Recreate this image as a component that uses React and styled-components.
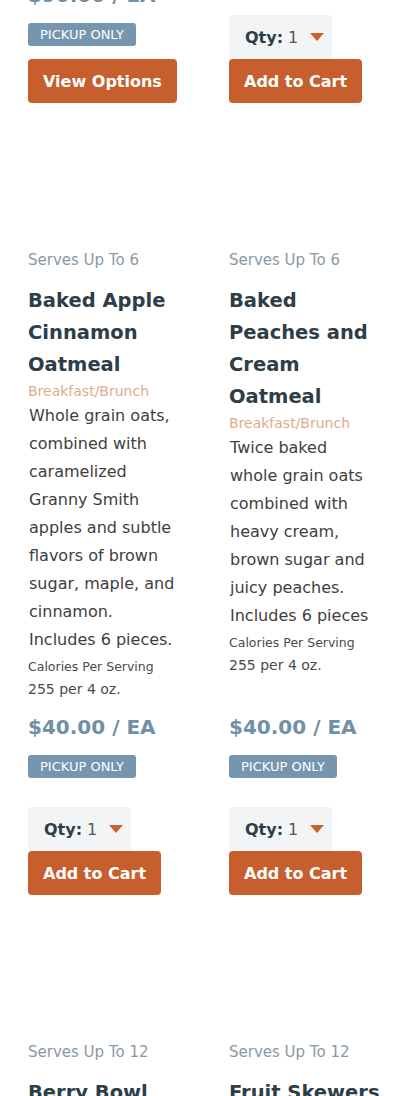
import React from 'react';
import styled, { createGlobalStyle } from 'styled-components';

const GlobalStyle = createGlobalStyle`
  html, body {
    margin: 0;
    padding: 0;
    background: #fff;
    overflow: hidden;
  }
  body {
    font-family: "DejaVu Sans", "Liberation Sans", sans-serif;
  }
`;

const Grid = styled.div`
  display: grid;
  grid-template-columns: 1fr 1fr;
  column-gap: 28px;
  row-gap: 28px;
  padding: 0 8px 0 28px;
  margin-top: -92px;
`;

const Card = styled.div`
  display: flex;
  flex-direction: column;
  padding-right: 14px;
  min-width: 0;
`;

const Photo = styled.div`
  height: 120px;
  flex-shrink: 0;
`;

const Serves = styled.div`
  font-size: 15px;
  line-height: 18px;
  color: #8a99a4;
  margin-bottom: 16px;
`;

const Title = styled.h3`
  margin: 0;
  font-size: 19.5px;
  line-height: 32px;
  font-weight: 700;
  color: #2e3e49;
`;

const Category = styled.div`
  font-size: 14px;
  line-height: 20px;
  color: #e0ab8d;
  margin-bottom: 1px;
`;

const Desc = styled.p`
  margin: 0;
  padding: 0 11px 0 1px;
  font-size: 16px;
  line-height: 28px;
  color: #404040;
`;

const CalLabel = styled.div`
  margin-top: 2px;
  font-size: 12.5px;
  line-height: 22px;
  color: #4a4a4a;
`;

const CalValue = styled.div`
  font-size: 14px;
  line-height: 22px;
  color: #4a4a4a;
`;

const Purchase = styled.div`
  margin-top: auto;
  padding-top: 13px;
  display: flex;
  flex-direction: column;
  align-items: flex-start;
`;

const Price = styled.div`
  font-size: 20px;
  line-height: 28px;
  font-weight: 700;
  color: #7090a7;
  white-space: nowrap;
`;

const Badge = styled.span`
  margin-top: 14px;
  height: 23px;
  padding: 0 12px;
  display: inline-flex;
  align-items: center;
  border-radius: 3px;
  background: #7596ae;
  color: #fff;
  font-size: 13px;
  white-space: nowrap;
`;

const QtySelect = styled.div`
  margin-top: 29px;
  width: 103px;
  height: 44px;
  box-sizing: border-box;
  padding: 0 8px 0 16px;
  display: flex;
  align-items: center;
  background: #f3f4f5;
  border-radius: 4px 4px 0 0;
  font-size: 16px;
  color: #2e3e49;
`;

const QtyLabel = styled.b`
  font-weight: 700;
  margin-right: 5px;
`;

const QtyValue = styled.span`
  color: #555;
  flex: 1;
`;

const Caret = styled.span`
  width: 0;
  height: 0;
  border-left: 7px solid transparent;
  border-right: 7px solid transparent;
  border-top: 8px solid #c9622f;
`;

const Button = styled.button`
  margin-top: ${(p) => (p.$tight ? '13px' : '0')};
  height: 44px;
  padding: 0 15px;
  border: none;
  border-radius: 4px;
  background: #c65f2d;
  color: #fff;
  font-family: inherit;
  font-size: 16px;
  font-weight: 700;
  white-space: nowrap;
  cursor: pointer;
`;

const products = [
  {
    serves: 6,
    title: 'Baked Apple Cinnamon Oatmeal',
    category: 'Breakfast/Brunch',
    desc: 'Whole grain oats, combined with caramelized Granny Smith apples and subtle flavors of brown sugar, maple, and cinnamon. Includes 6 pieces.',
    calories: '255 per 4 oz.',
    price: '$40.00 / EA',
  },
  {
    serves: 6,
    title: 'Baked Peaches and Cream Oatmeal',
    category: 'Breakfast/Brunch',
    desc: 'Twice baked whole grain oats combined with heavy cream, brown sugar and juicy peaches. Includes 6 pieces',
    calories: '255 per 4 oz.',
    price: '$40.00 / EA',
  },
  { serves: 12, title: 'Berry Bowl' },
  { serves: 12, title: 'Fruit Skewers' },
];

function QtyPicker() {
  return (
    <QtySelect>
      <QtyLabel>Qty:</QtyLabel>
      <QtyValue>1</QtyValue>
      <Caret />
    </QtySelect>
  );
}

function ProductCard({ p }) {
  return (
    <Card>
      <Photo />
      <Serves>Serves Up To {p.serves}</Serves>
      <Title>{p.title}</Title>
      {p.category && <Category>{p.category}</Category>}
      {p.desc && <Desc>{p.desc}</Desc>}
      {p.calories && (
        <>
          <CalLabel>Calories Per Serving</CalLabel>
          <CalValue>{p.calories}</CalValue>
        </>
      )}
      {p.price && (
        <Purchase>
          <Price>{p.price}</Price>
          <Badge>PICKUP ONLY</Badge>
          <QtyPicker />
          <Button>Add to Cart</Button>
        </Purchase>
      )}
    </Card>
  );
}

export default function App() {
  return (
    <>
      <GlobalStyle />
      <Grid>
        <Card>
          <Purchase>
            <Price>$90.00 / EA</Price>
            <Badge>PICKUP ONLY</Badge>
            <Button $tight>View Options</Button>
          </Purchase>
        </Card>
        <Card>
          <Purchase>
            <Price>$90.00 / EA</Price>
            <Badge>PICKUP ONLY</Badge>
            <QtyPicker />
            <Button>Add to Cart</Button>
          </Purchase>
        </Card>
        {products.map((p, i) => (
          <ProductCard key={i} p={p} />
        ))}
      </Grid>
    </>
  );
}
